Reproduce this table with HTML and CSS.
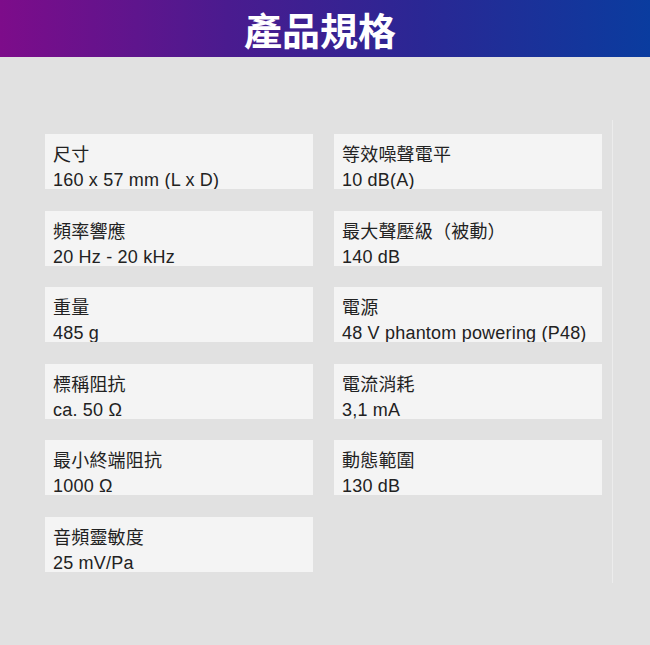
FILE: index.html
```html
<!DOCTYPE html>
<html lang="zh-Hant">
<head>
<meta charset="utf-8">
<title>產品規格</title>
<link rel="stylesheet" href="styles.css">
</head>
<body>
<header class="banner"><h1 class="banner-title">產品規格</h1></header>
<main class="content">
  <div class="specs">
    <div class="spec"><div class="spec-label">尺寸</div><div class="spec-value">160 x 57 mm (L x D)</div></div>
    <div class="spec"><div class="spec-label">等效噪聲電平</div><div class="spec-value">10 dB(A)</div></div>
    <div class="spec"><div class="spec-label">頻率響應</div><div class="spec-value">20 Hz - 20 kHz</div></div>
    <div class="spec"><div class="spec-label">最大聲壓級（被動）</div><div class="spec-value">140 dB</div></div>
    <div class="spec"><div class="spec-label">重量</div><div class="spec-value">485 g</div></div>
    <div class="spec"><div class="spec-label">電源</div><div class="spec-value">48 V phantom powering (P48)</div></div>
    <div class="spec"><div class="spec-label">標稱阻抗</div><div class="spec-value">ca. 50 Ω</div></div>
    <div class="spec"><div class="spec-label">電流消耗</div><div class="spec-value">3,1 mA</div></div>
    <div class="spec"><div class="spec-label">最小終端阻抗</div><div class="spec-value">1000 Ω</div></div>
    <div class="spec"><div class="spec-label">動態範圍</div><div class="spec-value">130 dB</div></div>
    <div class="spec"><div class="spec-label">音頻靈敏度</div><div class="spec-value">25 mV/Pa</div></div>
  </div>
  <div class="divider"></div>
</main>
</body>
</html>
```
FILE: styles.css
```css
html, body {
  margin: 0;
  padding: 0;
}
body {
  background: #e1e1e1;
  font-family: "Liberation Sans", "Noto Sans CJK TC", sans-serif;
  color: #222;
  width: 650px;
  height: 645px;
  overflow: hidden;
}
.banner {
  height: 57px;
  background: linear-gradient(90deg, #7d0c8a 0%, #4a1b8f 35%, #2a2794 65%, #0a3c9f 100%);
  display: flex;
  align-items: center;
  justify-content: center;
  padding-right: 10px;
}
.banner-title {
  margin: 0;
  color: #fff;
  font-family: "Noto Sans CJK TC", sans-serif;
  font-size: 38px;
  font-weight: 700;
  line-height: 1;
}
.content {
  display: flex;
  padding: 63px 0 0 45px;
}
.specs {
  display: grid;
  grid-template-columns: 268px 268px;
  column-gap: 21px;
  row-gap: 21.6px;
  align-content: start;
  padding-top: 14px;
}
.spec {
  background: #f4f4f4;
  height: 55px;
  overflow: hidden;
  padding: 9px 8px 0;
  box-sizing: border-box;
  font-size: 18px;
  line-height: 25px;
  letter-spacing: 0.2px;
}
.spec-label,
.spec-value {
  white-space: nowrap;
}
.divider {
  width: 1px;
  height: 463px;
  background: #ececec;
  margin-left: 10px;
}
```
